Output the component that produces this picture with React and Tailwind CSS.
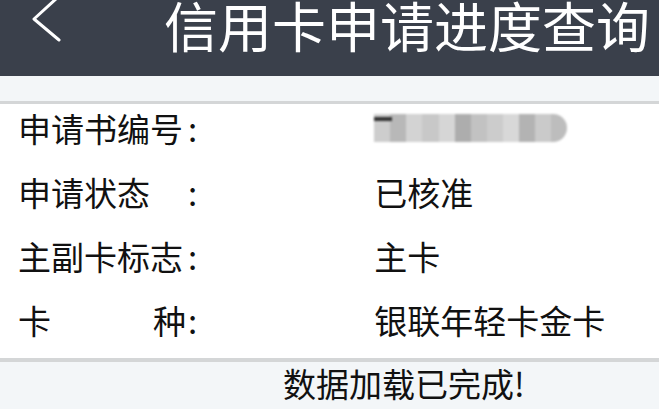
import React from "react";

const rows = [
  { label: "申请书编号", value: null },
  { label: "申请状态", value: "已核准" },
  { label: "主副卡标志", value: "主卡" },
  { label: "卡种", value: "银联年轻卡金卡", spread: true },
];

// mosaic blocks standing in for the blurred application number
const mosaic = [
  "#cdcdcd", "#b8b8b8", "#d3d3d3", "#c8c8c8", "#d6d6d6", "#adadad",
  "#c2c2c2", "#cccccc", "#d8d8d8", "#b3b3b3", "#cacaca", "#bdbdbd",
];

const Masked = () => (
  <div className="relative flex h-[28px] w-[193px] overflow-hidden rounded-r-full blur-[1px]">
    {mosaic.map((c, i) => (
      <div key={i} className="h-full flex-1" style={{ backgroundColor: c }} />
    ))}
    <div className="absolute left-0 top-[3px] h-[4px] w-[18px] bg-[#333]" />
  </div>
);

export default function App() {
  return (
    <div
      className="flex h-[409px] w-[659px] flex-col overflow-hidden bg-white text-[#111]"
      style={{ fontFamily: '"Noto Sans CJK SC", "Noto Sans", sans-serif' }}
    >
      <header className="flex h-[76px] shrink-0 items-start bg-[#3a404b] text-white">
        <svg width="70" height="50" viewBox="0 0 70 50" className="shrink-0">
          <path d="M57 -2 L34 19 L59 40" fill="none" stroke="#fff" strokeWidth="3" strokeLinecap="round" strokeLinejoin="round" />
        </svg>
        <h1 className="-mt-[2px] ml-[94px] whitespace-nowrap text-[54px] font-normal leading-[54px]">
          信用卡申请进度查询
        </h1>
      </header>
      <div className="h-[25px] shrink-0 bg-[#f3f6f8]" />
      <div className="h-[3px] shrink-0 bg-[#d4d6d7]" />
      <div className="-mt-[8px] mb-[6px] flex shrink-0 flex-col">
        {rows.map((r, i) => (
          <div key={i} className="flex h-[64px] items-center pl-[18px] text-[33px] leading-none">
            <span className={`flex w-[170px] ${r.spread ? "justify-between pr-[2px]" : ""}`}>
              {r.spread ? (
                <>
                  <span>卡</span>
                  <span>种</span>
                </>
              ) : (
                r.label
              )}
            </span>
            <span>:</span>
            <div className="ml-[177px]">{r.value ? r.value : <Masked />}</div>
          </div>
        ))}
      </div>
      <div className="h-[4px] shrink-0 bg-[#d4d6d7]" />
      <div className="flex-1 bg-[#f3f6f8] pl-[283px] pt-[1px] text-[33px] leading-[40px]">
        数据加载已完成!
      </div>
    </div>
  );
}
